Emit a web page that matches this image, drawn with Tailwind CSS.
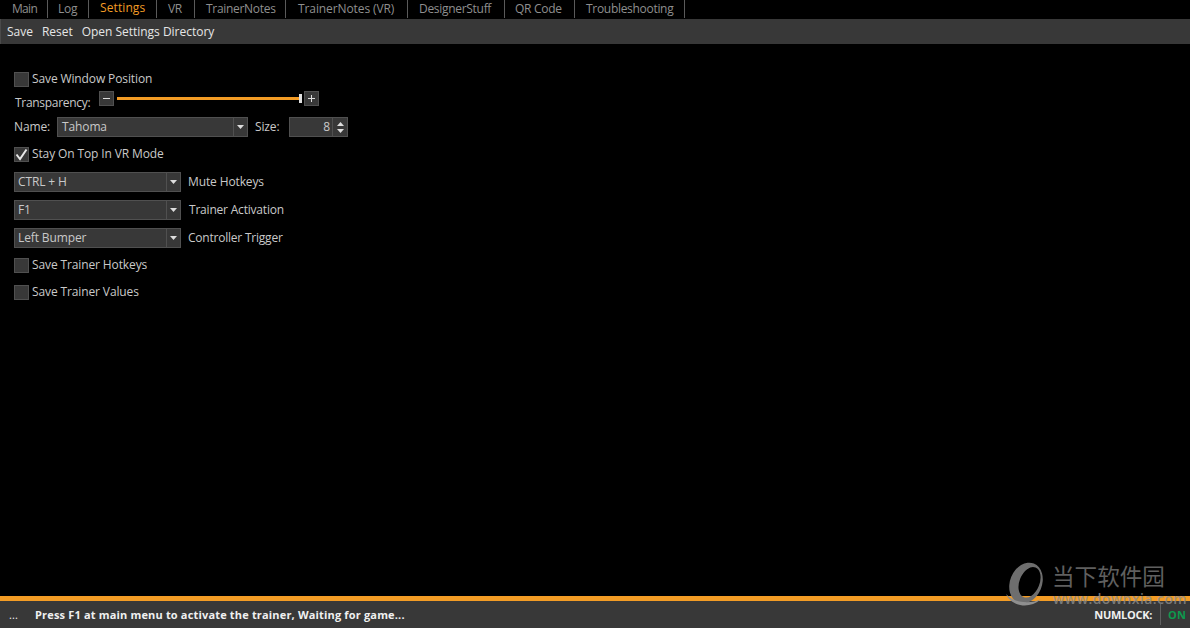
<!DOCTYPE html>
<html><head><meta charset="utf-8">
<script src="https://cdn.jsdelivr.net/npm/@tailwindcss/browser@4"></script>
</head>
<body class="bg-black">
<div class="relative w-[1190px] h-[628px] bg-black overflow-hidden flex flex-col font-['Open_Sans','Liberation_Sans',sans-serif] text-[12px] leading-[16px] tracking-[-0.12px] text-[#c9c9c9]">
  <div class="h-[19px] flex items-stretch text-[#8f8f8f] shrink-0 tracking-[-0.3px]">
    <div class="w-[48px] pl-[12px] pt-px border-r border-[#5a5a5a] mb-px tracking-[-0.7px]">Main</div>
    <div class="w-[41px] pl-[10px] pt-px border-r border-[#5a5a5a] mb-px">Log</div>
    <div class="w-[68px] pl-[11px] text-[#f39c25] border-r border-[#5a5a5a] mb-px tracking-[0.1px]">Settings</div>
    <div class="w-[38px] pl-[11px] pt-px border-r border-[#5a5a5a] mb-px">VR</div>
    <div class="w-[91px] pl-[11px] pt-px border-r border-[#5a5a5a] mb-px">TrainerNotes</div>
    <div class="w-[122px] pl-[12px] pt-px border-r border-[#5a5a5a] mb-px tracking-[-0.1px]">TrainerNotes (VR)</div>
    <div class="w-[97px] pl-[11px] pt-px border-r border-[#5a5a5a] mb-px">DesignerStuff</div>
    <div class="w-[70px] pl-[10px] pt-px border-r border-[#5a5a5a] mb-px">QR Code</div>
    <div class="w-[110px] pl-[11px] pt-px border-r border-[#5a5a5a] mb-px">Troubleshooting</div>
  </div>
  <div class="h-[25px] bg-[#383838] flex items-center pl-[6px] gap-[9px] text-[#e6e6e6] shrink-0 border-l border-[#4a4a4a] tracking-[-0.02px]">
    <span>Save</span><span>Reset</span><span>Open Settings Directory</span>
  </div>
  <div class="flex-1 pl-[14px] pt-[27px] flex flex-col items-start">
    <div class="h-[16px] flex items-center gap-[3px]">
      <span class="w-[15px] h-[15px] bg-[#383838] border border-[#505050]"></span><span>Save Window Position</span>
    </div>
    <div class="h-[16px] mt-[8px] flex items-center">
      <span class="w-[85px] pl-px tracking-[-0.3px]">Transparency:</span>
      <span class="w-[15px] h-[15px] bg-[#383838] border border-[#505050] flex items-center justify-center -mt-[10px]"><svg width="9" height="9" viewBox="0 0 9 9"><path d="M1 4.500H8" stroke="#ddd"/></svg></span>
      <span class="w-[184px] ml-[3px] h-[3px] bg-[#f39c25] -mt-[10px] relative"><span class="absolute right-[-1px] -top-[3px] w-[3px] h-[9px] bg-[#e0e0e0]"></span></span>
      <span class="w-[15px] h-[15px] ml-[3px] bg-[#383838] border border-[#505050] flex items-center justify-center -mt-[10px]"><svg width="9" height="9" viewBox="0 0 9 9"><path d="M1 4.500H8M4.500 1V8" stroke="#ddd"/></svg></span>
    </div>
    <div class="h-[20px] mt-[6px] flex items-center">
      <span class="w-[43px]">Name:</span>
      <span class="w-[191px] h-[20px] bg-[#383838] border border-[#505050] flex items-center pl-[4px] justify-between">Tahoma<span class="w-[14px] h-[18px] border-l border-[#505050] flex items-center justify-center"><svg width="7" height="4" viewBox="0 0 7 4"><path d="M0 0H7L3.500 4Z" fill="#ddd"/></svg></span></span>
      <span class="ml-[7px] w-[34px]">Size:</span>
      <span class="w-[59px] h-[20px] bg-[#383838] border border-[#505050] flex items-center justify-end">8<span class="w-[15px] h-[18px] ml-[2px] border-l border-[#505050] flex flex-col items-center justify-center gap-[3px]"><svg width="7" height="4" viewBox="0 0 7 4"><path d="M0 4H7L3.500 0Z" fill="#ddd"/></svg><svg width="7" height="4" viewBox="0 0 7 4"><path d="M0 0H7L3.500 4Z" fill="#ddd"/></svg></span></span>
    </div>
    <div class="h-[16px] mt-[9px] flex items-center gap-[3px]">
      <span class="w-[15px] h-[15px] bg-[#383838] border border-[#505050] flex items-center justify-center"><svg width="13" height="13" viewBox="0 0 13 13"><path d="M1.500 6.500L5 11L11.500 1.500" fill="none" stroke="#e8e8e8" stroke-width="2"/></svg></span><span>Stay On Top In VR Mode</span>
    </div>
    <div class="h-[20px] mt-[10px] flex items-center gap-[7px]">
      <span class="w-[167px] h-[20px] bg-[#383838] border border-[#505050] flex items-center pl-[3px] justify-between">CTRL + H<span class="w-[14px] h-[18px] border-l border-[#505050] flex items-center justify-center"><svg width="7" height="4" viewBox="0 0 7 4"><path d="M0 0H7L3.500 4Z" fill="#ddd"/></svg></span></span><span>Mute Hotkeys</span>
    </div>
    <div class="h-[20px] mt-[8px] flex items-center gap-[8px]">
      <span class="w-[167px] h-[20px] bg-[#383838] border border-[#505050] flex items-center pl-[3px] justify-between">F1<span class="w-[14px] h-[18px] border-l border-[#505050] flex items-center justify-center"><svg width="7" height="4" viewBox="0 0 7 4"><path d="M0 0H7L3.500 4Z" fill="#ddd"/></svg></span></span><span class="tracking-[-0.2px]">Trainer Activation</span>
    </div>
    <div class="h-[20px] mt-[8px] flex items-center gap-[7px]">
      <span class="w-[167px] h-[20px] bg-[#383838] border border-[#505050] flex items-center pl-[3px] justify-between">Left Bumper<span class="w-[14px] h-[18px] border-l border-[#505050] flex items-center justify-center"><svg width="7" height="4" viewBox="0 0 7 4"><path d="M0 0H7L3.500 4Z" fill="#ddd"/></svg></span></span><span class="tracking-[-0.22px]">Controller Trigger</span>
    </div>
    <div class="h-[16px] mt-[9px] flex items-center gap-[3px]">
      <span class="w-[15px] h-[15px] bg-[#383838] border border-[#505050]"></span><span>Save Trainer Hotkeys</span>
    </div>
    <div class="h-[16px] mt-[11px] flex items-center gap-[3px]">
      <span class="w-[15px] h-[15px] bg-[#383838] border border-[#505050]"></span><span>Save Trainer Values</span>
    </div>
  </div>
  <div class="h-[5px] bg-[#f39c25] shrink-0"></div>
  <div class="h-[27px] bg-[#383838] flex items-center shrink-0 font-bold text-[#f0f0f0] text-[11px] tracking-[0.17px]">
    <span class="w-[35px] pl-[9px] font-normal">...</span>
    <span class="flex-1">Press F1 at main menu to activate the trainer, Waiting for game...</span>
    <span class="mr-[8px] tracking-[-0.3px]">NUMLOCK:</span>
    <span class="w-[30px] h-[21px] border-l border-[#5f5f5f] text-[#0d9a4e] pl-[7px] flex items-center">ON</span>
  </div>
  <div class="absolute left-[1005px] top-[562px] w-[185px] h-[46px] pointer-events-none">
    <svg class="absolute left-0 top-0" width="44" height="46" viewBox="0 0 44 46"><path transform="rotate(22 21 21)" d="M5 21a16 21 0 1 0 32 0a16 21 0 1 0 -32 0ZM14 19a10 16 0 1 0 20 0a10 16 0 1 0 -20 0Z" fill="#6e6e6e" fill-rule="evenodd"/><path d="M1 32C6 44 24 48 36 37C26 42 10 42 1 32Z" fill="#8f8f8f"/></svg>
    <div class="absolute left-[47px] top-0 font-['Noto_Sans_CJK_SC',sans-serif] text-[22.600px] leading-[28px] tracking-normal text-[#5f5f5f] whitespace-nowrap">当下软件园</div>
    <div class="absolute left-[48px] top-[30px] text-[14px] leading-[14px] font-semibold tracking-[0.4px] text-[#8c8c8c]/80 whitespace-nowrap">www.downxia.com</div>
  </div>
</div>
</body></html>
